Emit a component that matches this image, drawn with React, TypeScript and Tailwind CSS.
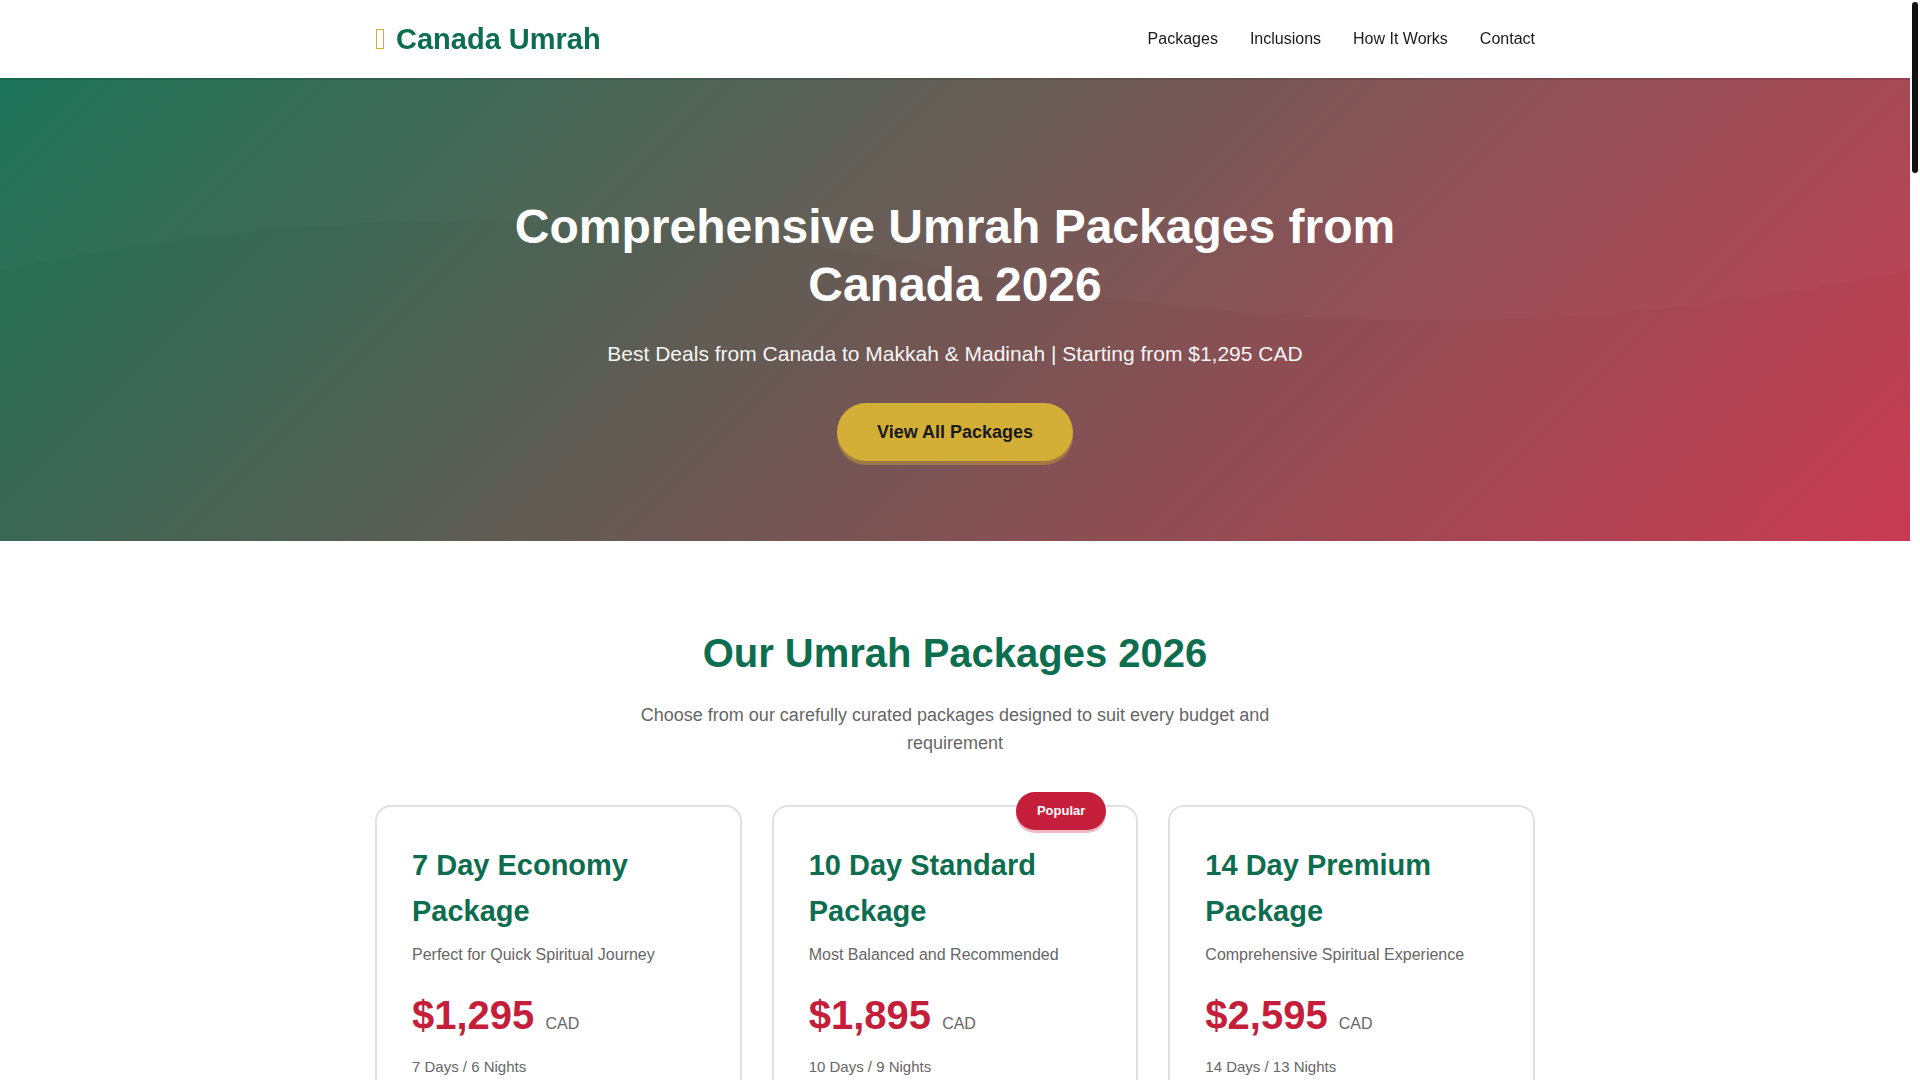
const navLinks = [
  { label: 'Packages', href: '#packages' },
  { label: 'Inclusions', href: '#inclusions' },
  { label: 'How It Works', href: '#how-it-works' },
  { label: 'Contact', href: '#contact' },
]

interface UmrahPackage {
  name: string
  tagline: string
  price: string
  duration: string
  popular?: boolean
}

const packages: UmrahPackage[] = [
  { name: '7 Day Economy Package', tagline: 'Perfect for Quick Spiritual Journey', price: '$1,295', duration: '7 Days / 6 Nights' },
  { name: '10 Day Standard Package', tagline: 'Most Balanced and Recommended', price: '$1,895', duration: '10 Days / 9 Nights', popular: true },
  { name: '14 Day Premium Package', tagline: 'Comprehensive Spiritual Experience', price: '$2,595', duration: '14 Days / 13 Nights' },
]

function Header() {
  return (
    <header className="sticky top-0 z-10 bg-white shadow-[0_2px_0_rgba(0,0,0,0.1)]">
      <div className="max-w-[1200px] mx-auto px-5 py-4 flex items-center justify-between">
        <a href="#" className="flex items-center gap-3 text-[29px] leading-[46px] font-bold text-[#0d6e4f]">
          <span className="w-2 h-5 ml-px border border-[#d4af37]" aria-hidden="true" />
          Canada Umrah
        </a>
        <nav className="flex gap-8">
          {navLinks.map((link) => (
            <a key={link.href} href={link.href} className="text-base text-[#1a1a1a] hover:text-[#0d6e4f]">
              {link.label}
            </a>
          ))}
        </nav>
      </div>
    </header>
  )
}

function Hero() {
  return (
    <section className="relative -mt-[78px] pt-[198px] pb-20 bg-[linear-gradient(135deg,#137455_0%,#c93b53_100%)] text-white text-center">
      {/* wave overlay */}
      <svg className="absolute inset-0 w-full h-full" viewBox="0 0 1200 540" preserveAspectRatio="none" aria-hidden="true">
        <path d="M0 270 Q300 170 600 270 T1200 270 V0 H0 Z" fill="#fff" fillOpacity="0.02" />
      </svg>
      <div className="relative max-w-[940px] mx-auto px-5">
        <h1 className="text-5xl leading-[58px] font-bold mb-6">Comprehensive Umrah Packages from Canada 2026</h1>
        <p className="text-[21px] leading-[31px] opacity-95 mb-[34px]">
          Best Deals from Canada to Makkah &amp; Madinah | Starting from $1,295 CAD
        </p>
        <a
          href="#packages"
          className="inline-block px-10 py-[15px] rounded-full bg-[#d4af37] text-[#1a1a1a] text-lg leading-7 font-bold shadow-[0_4px_0_rgba(212,175,55,0.4)]"
        >
          View All Packages
        </a>
      </div>
    </section>
  )
}

function PackageCard({ pkg }: { pkg: UmrahPackage }) {
  return (
    <article className="relative bg-white border-2 border-[#e0e0e0] rounded-2xl p-[35px]">
      {pkg.popular && (
        <span className="absolute -top-[15px] right-[30px] px-[21px] py-2 rounded-full bg-[#c41e3a] text-white text-[13px] leading-[22px] font-bold shadow-[0_3px_0_rgba(196,30,58,0.3)]">
          Popular
        </span>
      )}
      <h3 className="text-[29px] leading-[46px] font-bold text-[#0d6e4f] mb-2">{pkg.name}</h3>
      <p className="text-base leading-[25px] text-[#666] mb-4">{pkg.tagline}</p>
      <div className="text-[40px] leading-[64px] font-bold text-[#c41e3a] mb-2">
        {pkg.price} <span className="text-base font-normal text-[#666]">CAD</span>
      </div>
      <p className="text-[15px] leading-6 text-[#666]">{pkg.duration}</p>
    </article>
  )
}

function Packages() {
  return (
    <section id="packages" className="py-20 bg-white">
      <div className="max-w-[1200px] mx-auto px-5">
        <h2 className="text-[40px] leading-[64px] font-bold text-center text-[#0d6e4f] mb-4">Our Umrah Packages 2026</h2>
        <p className="max-w-[700px] mx-auto text-lg leading-7 text-center text-[#666] mb-12">
          Choose from our carefully curated packages designed to suit every budget and requirement
        </p>
        <div className="grid grid-cols-3 gap-[30px]">
          {packages.map((pkg) => (
            <PackageCard key={pkg.name} pkg={pkg} />
          ))}
        </div>
      </div>
    </section>
  )
}

export default function App() {
  return (
    <div className="flex h-screen overflow-hidden bg-white font-['Liberation_Sans',Arial,sans-serif]">
      <div className="flex-1 min-w-0 overflow-y-auto [scrollbar-width:none]">
        <Header />
        <main>
          <Hero />
          <Packages />
        </main>
      </div>
      {/* scrollbar track */}
      <div className="w-[10px] shrink-0 p-0.5" aria-hidden="true">
        <div className="h-[171px] rounded-full bg-[#111]" />
      </div>
    </div>
  )
}
